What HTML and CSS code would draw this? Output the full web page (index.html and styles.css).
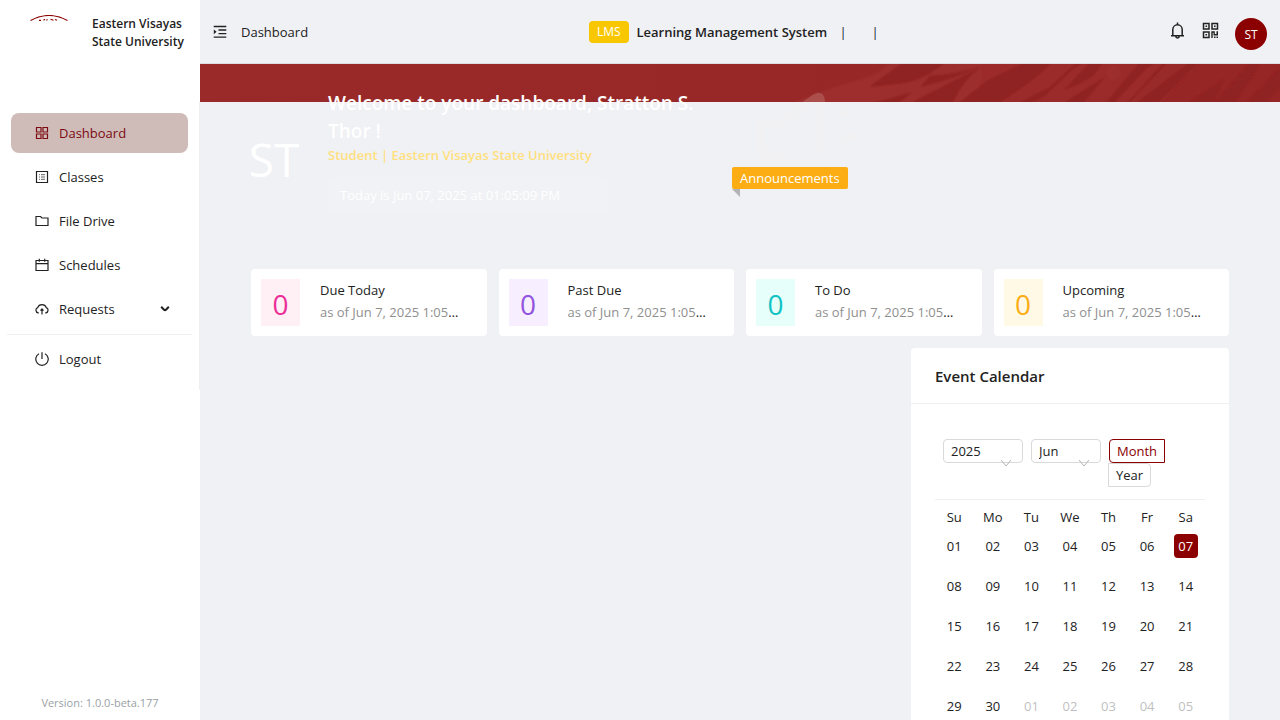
FILE: index.html
```html
<!DOCTYPE html>
<html lang="en">
<head>
<meta charset="utf-8">
<title>Dashboard</title>
<link rel="stylesheet" href="styles.css">
</head>
<body>
<div class="layout">
  <aside class="sider">
    <div class="brand">
      <svg class="brand-logo" viewBox="0 0 40 8" width="40" height="8"><path d="M1.500 5.500Q20-4.500 38.500 5.500"/><path d="M10 5.300h2M14.500 5.300l1.500-1M17.500 5.300l1-1M21.500 4.300l3 1M26 4.500l2 .8"/></svg>
      <strong class="brand-name">Eastern Visayas State University</strong>
    </div>
    <nav class="menu">
      <a class="item active" href="#"><svg class="ico" viewBox="0 0 14 14"><path d="M1.500 1.500h4.500v4.500h-4.500zM8 1.500h4.500v4.500h-4.500zM1.500 8h4.500v4.500h-4.500zM8 8h4.500v4.500h-4.500z"/></svg>Dashboard</a>
      <a class="item" href="#"><svg class="ico" viewBox="0 0 14 14"><path d="M1.500 1.500h11v11h-11z"/><path class="fine" d="M4 4.700h1M6 4.700h4M4 7h1M6 7h4M4 9.300h1M6 9.300h4"/></svg>Classes</a>
      <a class="item" href="#"><svg class="ico" viewBox="0 0 14 14"><path d="M1 2.500h4.500l1.500 1.500h6v7.500h-12z"/></svg>File Drive</a>
      <a class="item" href="#"><svg class="ico" viewBox="0 0 14 14"><path d="M1 2.500h12v10h-12zM1 5.700h12M4.300 .8v3M9.700 .8v3"/></svg>Schedules</a>
      <a class="item" href="#"><svg class="ico" viewBox="0 0 14 14"><path d="M3.800 10.800H3.200A2.700 2.700 0 0 1 2.700 5.600 4.500 4.300 0 0 1 11.300 5.600 2.700 2.700 0 0 1 10.800 10.800H10.200M7 12.500V7.200M5.500 8.700L7 7l1.500 1.700"/></svg>Requests<svg class="chev" viewBox="0 0 10 8"><path d="M1.200 1.700L4 4.700q1 .9 2 0L8.800 1.700"/></svg></a>
      <hr class="divider">
      <a class="item" href="#"><svg class="ico" viewBox="0 0 14 14"><path d="M4 1.700A6.200 6.200 0 1 0 10 1.700M7 .3v6.700"/></svg>Logout</a>
    </nav>
    <footer class="version">Version: 1.0.0-beta.177</footer>
  </aside>

  <div class="page">
    <header class="topbar">
      <div class="top-left">
        <button class="icon-btn" aria-label="Toggle menu"><svg class="fold" viewBox="0 0 14 14"><path d="M.7 1.500h12.600M5.500 5h7.800M5.500 8.600h7.800M.7 12.200h12.600"/><path class="solid" d="M.8 4.400v4.800L3.600 6.800z"/></svg></button>
        <span>Dashboard</span>
      </div>
      <div class="top-mid">
        <span class="tag">LMS</span>
        <strong class="sys">Learning Management System</strong>
        <span class="sep">|</span><span class="sep">|</span>
      </div>
      <div class="top-right">
        <button class="icon-btn" aria-label="Notifications"><svg class="bell" viewBox="0 0 17 17"><path d="M3.800 13.500V7.500a4.700 4.700 0 0 1 9.400 0V13.500M2 13.700h13M8.500 .5v2.300M6.800 14.200a1.700 1.700 0 0 0 3.400 0"/></svg></button>
        <button class="icon-btn" aria-label="QR code"><svg class="qr" viewBox="0 0 17 17"><path d="M1.500 1.500h5.500v5.500H1.500zM10 1.500h5.500v5.500H10zM1.500 10h5.500v5.500H1.500z"/><path class="solid" d="M3.500 3.500h1.600v1.600H3.500zM12 3.500h1.600v1.600H12zM3.500 12h1.600v1.600H3.500zM9.300 9.300h3.500v2.700h1.700V9.300h1.500v4.200h-4.500v-2.700h-.8v5.300H9.300zM12 14.600h1.500v1.500H12zM14.500 14.600h1.500v1.500h-1.500z"/></svg></button>
        <span class="avatar">ST</span>
      </div>
    </header>

    <section class="hero">
      <svg class="strip" viewBox="0 0 1080 38" preserveAspectRatio="none">
        <defs>
          <linearGradient id="base" x1="0" x2="1"><stop offset="0" stop-color="#9a2a2a"/><stop offset="1" stop-color="#962626"/></linearGradient>
          <linearGradient id="ray" x1="0" x2="1"><stop offset="0" stop-color="#9f3030"/><stop offset="1" stop-color="#992929"/></linearGradient>
          <filter id="soft"><feGaussianBlur stdDeviation=".8"/></filter>
        </defs>
        <rect width="1080" height="38" fill="url(#base)"/>
        <g filter="url(#soft)">
          <path fill="url(#ray)" d="M592 40Q630 24 660 16Q680 10 692-2H1000L960 40Z"/>
          <path fill="#8f2020" d="M669 23Q690 8 704-2H745Q728 14 705 19ZM720 23L730 12Q754 11 778 3Q760 12 742 17ZM668 40Q690 35 712 28L698 40ZM709 40L738 25 781 3Q762 16 752 40ZM758 40L788 16 826-2H852Q838 14 798 40ZM817 40L850 23 877-2H903L893 12Q870 26 857 27L828 40ZM862 40L905 13 882 40ZM905 40L940-2H968L928 40ZM935 40L990-2H999L957 40ZM988 40L1024 15 1013 40ZM1014 40L1051-2H1062L1034 40ZM1046 40L1084 0V20L1064 40Z"/>
          <path fill="#9b2b2b" d="M836 40L872 6 884-2H890L851 40ZM913 40L947 4 957-2H964L926 40Z"/>
          <circle cx="914" cy="9" r="7" fill="#9d2e2e"/>
        </g>
      </svg>
      <div class="hero-avatar">ST</div>
      <div class="hero-text">
        <h1>Welcome to your dashboard, Stratton S. Thor !</h1>
        <p class="role">Student | Eastern Visayas State University</p>
        <p class="clock">Today is Jun 07, 2025 at 01:05:09 PM</p>
      </div>
      <div class="news">
        <svg class="horn" viewBox="0 0 108 70"><path d="M31 65H8V35H26L62 9q6-4 6 4V66M84 27L97 19M88 48h16"/></svg>
        <span class="ribbon">Announcements</span>
      </div>
    </section>

    <main class="content">
      <div class="stats">
        <article class="stat"><span class="num pink">0</span><div class="meta"><h2>Due Today</h2><p><span>as of Jun 7, 2025 1:05:09 PM</span></p></div></article>
        <article class="stat"><span class="num purple">0</span><div class="meta"><h2>Past Due</h2><p><span>as of Jun 7, 2025 1:05:09 PM</span></p></div></article>
        <article class="stat"><span class="num cyan">0</span><div class="meta"><h2>To Do</h2><p><span>as of Jun 7, 2025 1:05:09 PM</span></p></div></article>
        <article class="stat"><span class="num gold">0</span><div class="meta"><h2>Upcoming</h2><p><span>as of Jun 7, 2025 1:05:09 PM</span></p></div></article>
      </div>

      <section class="calendar">
        <h2 class="cal-title">Event Calendar</h2>
        <div class="cal-body">
          <div class="cal-tools">
            <div class="pick year"><select aria-label="Year"><option>2025</option></select><svg viewBox="0 0 12 8"><path d="M1 1l5 6 5-6"/></svg></div>
            <div class="pick month"><select aria-label="Month"><option>Jun</option></select><svg viewBox="0 0 12 8"><path d="M1 1l5 6 5-6"/></svg></div>
            <div class="modes">
              <label class="mode"><input type="radio" name="mode" checked>Month</label>
              <label class="mode"><input type="radio" name="mode">Year</label>
            </div>
          </div>
          <table class="days">
            <thead><tr><th>Su</th><th>Mo</th><th>Tu</th><th>We</th><th>Th</th><th>Fr</th><th>Sa</th></tr></thead>
            <tbody>
              <tr><td>01</td><td>02</td><td>03</td><td>04</td><td>05</td><td>06</td><td><span class="today">07</span></td></tr>
              <tr><td>08</td><td>09</td><td>10</td><td>11</td><td>12</td><td>13</td><td>14</td></tr>
              <tr><td>15</td><td>16</td><td>17</td><td>18</td><td>19</td><td>20</td><td>21</td></tr>
              <tr><td>22</td><td>23</td><td>24</td><td>25</td><td>26</td><td>27</td><td>28</td></tr>
              <tr><td>29</td><td>30</td><td class="out">01</td><td class="out">02</td><td class="out">03</td><td class="out">04</td><td class="out">05</td></tr>
            </tbody>
          </table>
        </div>
      </section>
    </main>
  </div>
</div>
</body>
</html>
```
FILE: styles.css
```css
* { box-sizing: border-box; }
body { margin: 0; overflow: hidden; background: #f0f1f5; color: #222; font: 13px/22px "Segoe UI", "Open Sans", "Noto Sans", sans-serif; }
h1, h2, p { margin: 0; }
button { font: inherit; color: inherit; }
svg { display: block; fill: none; stroke: currentColor; flex: none; }
.solid { fill: currentColor; stroke: none; }
.fine { stroke-width: 1; opacity: .7; }
.layout { display: flex; height: 100vh; }

.sider { flex: none; width: 200px; display: flex; flex-direction: column; background: #fff; }
.brand { display: flex; gap: 23px; height: 102px; padding: 15px 8px 0 29px; }
.brand-logo { color: #8b0000; stroke-width: 1.2; }
.brand-name { font-size: 12px; line-height: 18px; font-weight: 600; }
.menu { display: flex; flex-direction: column; gap: 4px; padding: 11px; border-right: 1px solid #f0f0f0; }
.item { display: flex; align-items: center; gap: 10px; height: 40px; padding: 0 18px 0 24px; border-radius: 8px; color: #222; text-decoration: none; }
.item.active { background: #cfbcb8; color: #7c0a10; }
.ico { width: 14px; height: 14px; stroke-width: 1.2; }
.chev { width: 10px; height: 8px; margin-left: auto; stroke-width: 2; }
.divider { width: 185px; height: 1px; margin: 1px -4px 0; border: 0; background: #f0f0f0; }
.version { margin-top: auto; padding-bottom: 6px; text-align: center; color: #9a9fa6; font-size: 11px; }

.page { flex: 1; min-width: 0; }
.topbar { display: grid; grid-template-columns: 1fr auto 1fr; align-items: center; height: 64px; padding: 0 13px; border-bottom: 1px solid #dcdde1; }
.top-left, .top-mid, .top-right { display: flex; align-items: center; }
.top-left { gap: 14px; }
.top-right { justify-content: flex-end; gap: 16px; padding-top: 4px; }
.icon-btn { padding: 0; border: 0; background: none; }
.fold { width: 14px; height: 14px; stroke-width: 1.3; }
.bell, .qr { width: 17px; height: 17px; margin-bottom: 6px; stroke-width: 1.5; }
.tag { margin-right: 8px; padding: 0 8px; border-radius: 4px; background: #f9c700; color: #fff; font-size: 12px; }
.sys { font-weight: 600; }
.sep { width: 32px; text-align: center; color: #123; }
.avatar { width: 32px; height: 32px; border-radius: 50%; background: #8b0000; color: #fff; font-size: 12px; line-height: 34px; text-align: center; }

.hero { position: relative; display: grid; grid-template-columns: 98px 392px 1fr; gap: 5px; height: 205px; padding: 25px 51px 0 25px; }
.strip { position: absolute; top: 0; left: 0; width: 100%; height: 38px; stroke: none; }
.hero-avatar { position: relative; width: 98px; height: 98px; margin-top: 19px; border-radius: 50%; background: rgba(255,255,255,.06); color: #fff; font-size: 46px; line-height: 102px; text-align: center; }
.hero-text { position: relative; color: #fff; }
.hero-text h1 { font-size: 19px; line-height: 28px; font-weight: 600; }
.role { color: #ffe07e; font-weight: 600; line-height: 20px; }
.clock { width: 280px; margin-top: 12px; padding: 7px 12px; border-radius: 4px; background: rgba(255,255,255,.08); }
.news { position: relative; padding-left: 7px; }
.horn { width: 108px; height: 70px; margin-left: 21px; stroke: #f8f6ea; stroke-width: 8; opacity: .16; }
.ribbon { position: relative; display: inline-block; margin-top: 8px; padding: 0 8px; border-radius: 2px; background: #fcad14; color: #fff; }
.ribbon::after { content: ""; position: absolute; top: 100%; left: 0; border: 4px solid #b3b3b5; border-bottom-color: transparent; border-left-color: transparent; }

.content { padding: 0 51px; }
.stats { display: grid; grid-template-columns: repeat(4, 1fr); gap: 12px; }
.stat { display: flex; gap: 20px; min-width: 0; height: 67px; padding: 10px; border-radius: 4px; background: #fff; }
.num { flex: none; width: 39px; height: 47px; font-size: 28px; line-height: 50px; text-align: center; }
.pink { background: #fff0f6; color: #eb2f96; }
.purple { background: #f7eeff; color: #9254de; }
.cyan { background: #e6fffb; color: #13c2c2; }
.gold { background: #fff9e6; color: #faad14; }
.meta { flex: 1; min-width: 0; padding-right: 15px; }
.meta h2 { font-size: 13px; font-weight: 400; }
.meta p { overflow: hidden; white-space: nowrap; text-overflow: ellipsis; }
.meta p span { color: #8f8f8f; }

.calendar { width: 318px; margin: 12px 0 0 auto; border-radius: 4px; background: #fff; }
.cal-title { padding: 17px 24px 15px; border-bottom: 1px solid #f0f0f0; font-size: 15px; line-height: 23px; font-weight: 600; }
.cal-body { padding: 24px; }
.cal-tools { display: flex; align-items: flex-start; gap: 8px; padding: 11px 8px 12px; }
.pick { position: relative; height: 24px; }
.pick select { appearance: none; width: 100%; height: 24px; padding: 0 7px; border: 1px solid #d9d9d9; border-radius: 4px; background: #fff; color: #222; font: inherit; }
.pick svg { position: absolute; right: 11px; top: 20px; width: 12px; height: 8px; stroke: #b5b5b5; }
.year { width: 80px; }
.month { width: 70px; }
.modes { flex: 1; }
.mode { display: block; width: fit-content; height: 24px; margin-left: -1px; padding: 0 7px; border: 1px solid #d9d9d9; border-radius: 0 4px 4px 0; }
.mode:first-child { margin-left: 0; }
.mode input { position: absolute; opacity: 0; margin: 0; }
.mode:has(:checked) { border-color: #8b0000; border-radius: 4px 0 0 4px; color: #8b0000; }
.days { width: 100%; table-layout: fixed; border-collapse: collapse; border-top: 1px solid #f0f0f0; text-align: center; }
.days th { padding: 6px 0 4px; font-weight: 400; line-height: 22px; }
.days td { height: 40px; padding: 2px 0 14px; line-height: 24px; }
.today { display: inline-block; width: 24px; border-radius: 4px; background: #8b0000; color: #fff; }
.out { color: #bfbfbf; }
```
